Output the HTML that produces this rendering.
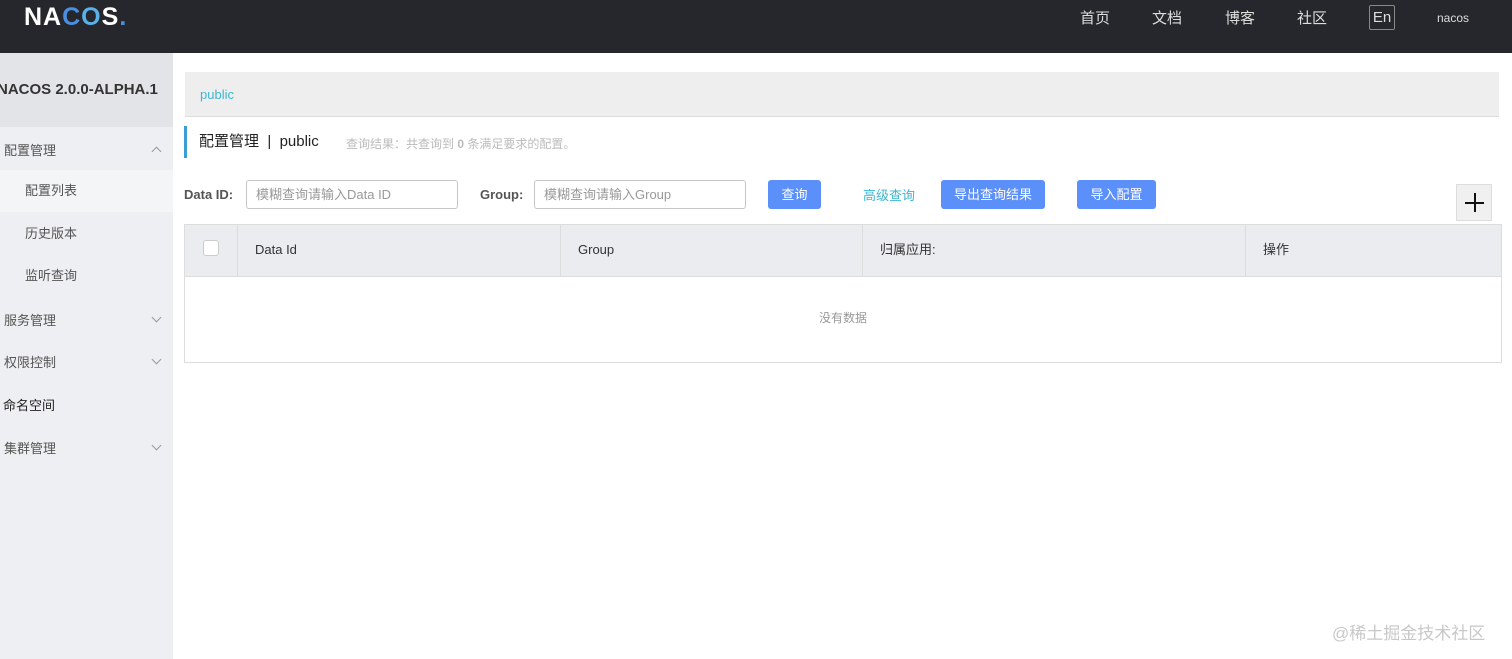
<!DOCTYPE html>
<html><head><meta charset="utf-8">
<style>
*{margin:0;padding:0;box-sizing:border-box}
body{width:1512px;height:659px;overflow:hidden;background:#fff;font-family:"Liberation Sans","Noto Sans CJK SC",sans-serif;font-size:13px;color:#333;position:relative}
.hdr{position:absolute;left:0;top:0;width:1512px;height:53px;background:#25272c}
.logo{position:absolute;left:24px;top:3px;font-size:25px;font-weight:bold;color:#fff;letter-spacing:1px}
.nav{position:absolute;top:7px;font-size:15px;color:#ddd}
.en{position:absolute;left:1369px;top:5px;width:26px;height:25px;border:1px solid #888;border-radius:2px;color:#ddd;font-size:15px;text-align:center;line-height:23px}
.side{position:absolute;left:0;top:53px;width:173px;height:606px;background:#eeeff2}
.side .top{height:74px;background:#e3e4e7;font-weight:bold;font-size:15px;color:#333;line-height:74px;margin-left:-3px}
.mi{position:absolute;left:4px;font-size:13px;color:#555}
.sub{position:absolute;left:0;width:173px;height:42px;line-height:42px;padding-left:25px;font-size:13px;color:#555}
.chev{position:absolute;left:153px;width:7px;height:7px;border-right:1px solid #999;border-bottom:1px solid #999}
.crumb{position:absolute;left:185px;top:72px;width:1314px;height:45px;background:#eeeeee;border-bottom:1px solid #ddd}
.crumb span{position:absolute;left:15px;top:15px;color:#3fb5d2;font-size:13px}
.title{position:absolute;left:184px;top:126px;height:32px;border-left:3px solid #3b9dd6;padding-left:12px;line-height:32px;font-size:15px;color:#222}
.res{position:absolute;left:346px;top:135px;font-size:12px;color:#bbb}
.lbl{position:absolute;top:187px;font-weight:bold;color:#555;font-size:13px}
.inp{position:absolute;top:180px;height:29px;border:1px solid #c6c6c6;border-radius:3px;padding-left:9px;line-height:27px;color:#999;font-size:13px}
.btn{position:absolute;top:180px;height:29px;background:#5b8ff9;border-radius:3px;color:#fff;text-align:center;line-height:29px;font-size:13px}
.plus{position:absolute;left:1456px;top:184px;width:36px;height:37px;background:#f0f0f0;border:1px solid #ddd}
.plus:before{content:"";position:absolute;left:8px;top:17px;width:19px;height:2px;background:#111}
.plus:after{content:"";position:absolute;left:17px;top:8px;width:2px;height:19px;background:#111}
.tbl{position:absolute;left:184px;top:224px;width:1318px;height:139px;border:1px solid #ddd}
.th{position:absolute;top:0;height:51px;background:#ebecf0;border-right:1px solid #dcdcdc;line-height:49px;padding-left:17px;font-size:13px;color:#333}
.cb{position:absolute;left:18px;top:15px;width:16px;height:16px;background:#fff;border:1px solid #ccc;border-radius:3px}
.empty{position:absolute;left:0;top:51px;width:100%;height:86px;border-top:1px solid #ddd;text-align:center;line-height:82px;color:#999;font-size:12px}
.wm{position:absolute;left:1332px;top:619px;font-size:17px;color:#c8c8c8}
</style></head><body>
<div class="hdr">
 <div class="logo">NA<span style="color:#4a8fe0">C</span><span style="color:#5ab0e8">O</span>S<span style="color:#4a8fe0">.</span></div>
 <div class="nav" style="left:1080px">首页</div>
 <div class="nav" style="left:1152px">文档</div>
 <div class="nav" style="left:1225px">博客</div>
 <div class="nav" style="left:1297px">社区</div>
 <div class="en">En</div>
 <div class="nav" style="left:1437px;top:11px;font-size:12px">nacos</div>
</div>
<div class="side">
 <div class="top">NACOS 2.0.0-ALPHA.1</div>
 <div class="mi" style="top:87px">配置管理</div>
 <div class="chev" style="top:95px;transform:rotate(-135deg)"></div>
 <div class="sub" style="top:117px;background:#f4f5f7">配置列表</div>
 <div class="sub" style="top:160px">历史版本</div>
 <div class="sub" style="top:202px">监听查询</div>
 <div class="mi" style="top:257px">服务管理</div>
 <div class="chev" style="top:261px;transform:rotate(45deg)"></div>
 <div class="mi" style="top:299px">权限控制</div>
 <div class="chev" style="top:303px;transform:rotate(45deg)"></div>
 <div class="mi" style="top:342px;color:#222;left:3px">命名空间</div>
 <div class="mi" style="top:385px">集群管理</div>
 <div class="chev" style="top:389px;transform:rotate(45deg)"></div>
</div>
<div class="crumb"><span>public</span></div>
<div class="title">配置管理 &nbsp;|&nbsp; public</div>
<div class="res">查询结果：共查询到 <b>0</b> 条满足要求的配置。</div>
<div class="lbl" style="left:184px">Data ID:</div>
<div class="inp" style="left:246px;width:212px">模糊查询请输入Data ID</div>
<div class="lbl" style="left:480px">Group:</div>
<div class="inp" style="left:534px;width:212px">模糊查询请输入Group</div>
<div class="btn" style="left:768px;width:53px">查询</div>
<div style="position:absolute;left:863px;top:185px;color:#3fb5d2;font-size:13px">高级查询</div>
<div class="btn" style="left:941px;width:104px">导出查询结果</div>
<div class="btn" style="left:1077px;width:79px">导入配置</div>
<div class="plus"></div>
<div class="tbl">
 <div class="th" style="left:0;width:53px"><div class="cb"></div></div>
 <div class="th" style="left:53px;width:323px">Data Id</div>
 <div class="th" style="left:376px;width:302px">Group</div>
 <div class="th" style="left:678px;width:383px">归属应用:</div>
 <div class="th" style="left:1061px;width:255px;border-right:none">操作</div>
 <div class="empty">没有数据</div>
</div>
<div class="wm">@稀土掘金技术社区</div>
</body></html>
